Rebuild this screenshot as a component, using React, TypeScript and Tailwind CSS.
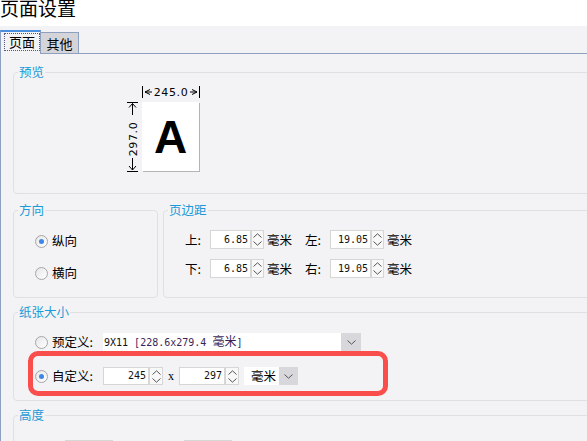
import React from "react";

function Chevron({ up }: { up: boolean }) {
  return (
    <svg width="9" height="5" viewBox="0 0 9 5" className="block">
      <path
        d={up ? "M0.5 4.5 L4.5 0.8 L8.5 4.5" : "M0.5 0.5 L4.5 4.2 L8.5 0.5"}
        fill="none"
        stroke="#555"
        strokeWidth="1"
      />
    </svg>
  );
}

function Spinner({ cls }: { cls: string }) {
  return (
    <div className={`flex flex-col border border-[#d6d6d6] bg-[#f8f8f8] ${cls}`}>
      <div className="flex-1 flex items-center justify-center">
        <Chevron up />
      </div>
      <div className="flex-1 flex items-center justify-center">
        <Chevron up={false} />
      </div>
    </div>
  );
}

function NumBox({ value, cls }: { value: string; cls: string }) {
  return (
    <div
      className={`bg-white border border-[#d6d6d6] flex items-center justify-end pr-[2px] font-['DejaVu_Sans_Mono','Noto_Sans_CJK_SC',monospace] text-[10px] leading-none text-[#111] ${cls}`}
    >
      {value}
    </div>
  );
}

function Radio({ checked }: { checked?: boolean }) {
  return (
    <span className="w-[13px] h-[13px] shrink-0 rounded-full border border-[#a6a6a6] bg-gradient-to-br from-[#e6e6e6] to-white flex items-center justify-center">
      {checked && <span className="w-[5px] h-[5px] rounded-full bg-[#3d86e8]" />}
    </span>
  );
}

function Legend({ children }: { children: React.ReactNode }) {
  return (
    <legend className="ml-[4px] px-[1px] text-[#1a9ad6] leading-[14px]">{children}</legend>
  );
}

function MarginRow({ a, av, b, bv }: { a: string; av: string; b: string; bv: string }) {
  return (
    <div className="flex items-center h-[19px]">
      <span className="w-[25px]">{a}:</span>
      <NumBox value={av} cls="w-[41px] h-[19px]" />
      <Spinner cls="w-[13px] h-[19px]" />
      <span className="w-[41px] pl-[3px]">毫米</span>
      <span className="w-[25px]">{b}:</span>
      <NumBox value={bv} cls="w-[41px] h-[19px]" />
      <Spinner cls="w-[13px] h-[19px]" />
      <span className="pl-[3px]">毫米</span>
    </div>
  );
}

export default function App() {
  return (
    <div className="relative w-[587px] h-[441px] overflow-hidden bg-[#f3f3f5] text-black text-[12.5px] leading-[14px] font-['Noto_Sans_CJK_SC',sans-serif]">
      <div className="h-[26px] bg-white text-[19px] leading-[15px] whitespace-nowrap">页面设置</div>

      {/* tabs */}
      <div className="mt-[4px] flex items-end h-[23px]">
        <div className="relative z-10 -mb-px h-[24px] w-[41px] border-t-2 border-t-[#4a8fe0] border-x border-x-[#8da0bf] bg-[#f3f3f5] pl-[3px] pt-[1px]">
          <div className="w-[36px] h-[18px] border border-dotted border-[#55557a] flex items-center justify-center text-[13px]">
            页面
          </div>
        </div>
        <div className="h-[21px] w-[38px] border-t border-r border-[#8da0bf] bg-[#d5d5d9] flex items-center justify-center pt-[2px] text-[13px]">
          其他
        </div>
      </div>

      {/* panel */}
      <div className="border-t border-l border-[#8da0bf] w-[700px] pl-[12px] pb-[40px]">
        {/* preview */}
        <fieldset className="mt-[11px] w-[620px] min-w-0 border border-[#e0e0e4] rounded-[4px]">
          <Legend>预览</Legend>
          <div className="h-[114px] pl-[112px] pt-[7px]">
            <svg width="58" height="12" viewBox="0 0 58 12" className="block ml-[16px]">
              <line x1="0.5" y1="0" x2="0.5" y2="12" stroke="#000" />
              <path d="M8 3.5 L3 6 L8 8.5" fill="none" stroke="#000" />
              <line x1="3" y1="6" x2="10" y2="6" stroke="#000" />
              <text x="29" y="10" textAnchor="middle" fontSize="11" fontFamily="DejaVu Sans, sans-serif" letterSpacing="0.6" fill="#000">
                245.0
              </text>
              <path d="M50 3.5 L55 6 L50 8.5" fill="none" stroke="#000" />
              <line x1="48" y1="6" x2="55" y2="6" stroke="#000" />
              <line x1="57.5" y1="0" x2="57.5" y2="12" stroke="#000" />
            </svg>
            <div className="mt-[4px] flex">
              <svg width="14" height="70" viewBox="0 0 14 70" className="block">
                <line x1="1" y1="0.5" x2="12" y2="0.5" stroke="#000" />
                <path d="M3 5.5 L6.5 1.5 L10 5.5" fill="none" stroke="#000" />
                <line x1="6.5" y1="1.5" x2="6.5" y2="13" stroke="#000" />
                <text
                  transform="translate(10.5,37) rotate(-90)"
                  textAnchor="middle"
                  fontSize="11"
                  fontFamily="DejaVu Sans, sans-serif"
                  letterSpacing="0.6"
                  fill="#000"
                >
                  297.0
                </text>
                <line x1="6.5" y1="56" x2="6.5" y2="68" stroke="#000" />
                <path d="M3 64 L6.5 68 L10 64" fill="none" stroke="#000" />
                <line x1="1" y1="69.5" x2="12" y2="69.5" stroke="#000" />
              </svg>
              <div className="ml-[2px] w-[57px] h-[69px] bg-white shadow-[1px_1px_0_#b4b4b4] flex items-center justify-center font-['Liberation_Sans',sans-serif] font-bold text-[46px] leading-none">
                A
              </div>
            </div>
          </div>
        </fieldset>

        {/* orientation + margins */}
        <div className="mt-[9px] flex w-[620px]">
          <fieldset className="w-[145px] min-w-0 border border-[#e0e0e4] rounded-[4px]">
            <Legend>方向</Legend>
            <div className="h-[80px] pl-[21px] pt-[14px] flex flex-col gap-[12px]">
              <div className="h-[20px] flex items-center gap-[4px]">
                <Radio checked />
                <span>纵向</span>
              </div>
              <div className="h-[20px] flex items-center gap-[4px]">
                <Radio />
                <span>横向</span>
              </div>
            </div>
          </fieldset>
          <fieldset className="ml-[5px] flex-1 min-w-0 border border-[#e0e0e4] rounded-[4px]">
            <Legend>页边距</Legend>
            <div className="h-[80px] pl-[21px] pt-[13px] flex flex-col gap-[10px]">
              <MarginRow a="上" av="6.85" b="左" bv="19.05" />
              <MarginRow a="下" av="6.85" b="右" bv="19.05" />
            </div>
          </fieldset>
        </div>

        {/* paper size */}
        <fieldset className="mt-[7px] w-[620px] min-w-0 border border-[#e0e0e4] rounded-[4px]">
          <Legend>纸张大小</Legend>
          <div className="h-[81px] pl-[21px] pt-[14px] flex flex-col gap-[16px]">
            <div className="h-[18px] flex items-center">
              <Radio />
              <span className="ml-[4px] w-[51px]">预定义:</span>
              <div className="w-[258px] h-[18px] bg-white flex items-center">
                <span className="flex-1 pl-[1px] font-['DejaVu_Sans_Mono','Noto_Sans_CJK_SC',monospace] text-[10px] whitespace-nowrap text-[#111]">
                  9X11 <span className="text-[#3c1f58]">[228.6x279.4 <span className="text-[12px]">毫米</span>]</span>
                </span>
                <span className="w-[20px] h-[18px] bg-[#d8d8dc] flex items-center justify-center">
                  <Chevron up={false} />
                </span>
              </div>
            </div>
            <div className="h-[18px] flex items-center">
              <Radio checked />
              <span className="ml-[4px] w-[51px]">自定义:</span>
              <NumBox value="245" cls="w-[46px] h-[18px]" />
              <Spinner cls="w-[14px] h-[18px]" />
              <span className="ml-[5px] w-[11px] font-['Liberation_Serif',serif] text-[12px]">x</span>
              <NumBox value="297" cls="w-[46px] h-[18px]" />
              <Spinner cls="w-[14px] h-[18px]" />
              <div className="ml-[5px] w-[54px] h-[18px] bg-white flex items-center">
                <span className="flex-1 pl-[7px]">毫米</span>
                <span className="w-[19px] h-[18px] bg-[#d8d8dc] flex items-center justify-center">
                  <Chevron up={false} />
                </span>
              </div>
            </div>
          </div>
        </fieldset>

        {/* height */}
        <fieldset className="mt-[7px] w-[620px] min-w-0 border border-[#e0e0e4] rounded-[4px]">
          <Legend>高度</Legend>
          <div className="h-[60px] pt-[18px] pl-[51px] flex">
            <NumBox value="" cls="w-[36px] h-[19px]" />
            <Spinner cls="w-[12px] h-[19px]" />
            <div className="w-[71px]" />
            <NumBox value="" cls="w-[36px] h-[19px]" />
            <Spinner cls="w-[12px] h-[19px]" />
          </div>
        </fieldset>
      </div>

      {/* annotation */}
      <div className="absolute left-[28px] top-[351px] w-[360px] h-[45px] border-[5px] border-[#f94e4b] rounded-[10px]" />
    </div>
  );
}
